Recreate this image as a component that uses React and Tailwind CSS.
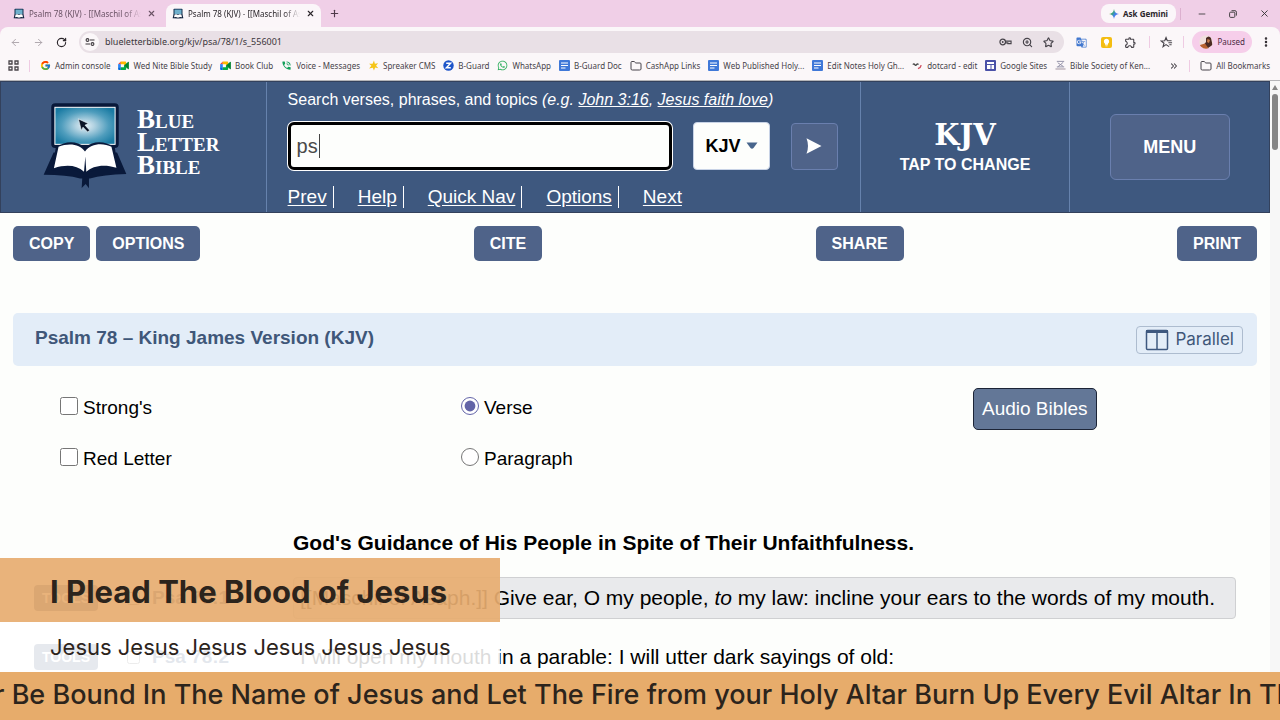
import { useState } from "react";
import {
  ArrowLeft,
  ArrowRight,
  RotateCw,
  X,
  Plus,
  Minus,
  Star,
  Folder,
  ZoomIn,
  EllipsisVertical,
  ChevronsRight,
} from "lucide-react";
import { FcGoogle } from "react-icons/fc";
import { FaWhatsapp } from "react-icons/fa";
import { MdLightbulb, MdGTranslate, MdOutlineExtension, MdPhoneInTalk } from "react-icons/md";

function BlbLogo({ className }) {
  return (
    <svg viewBox="128 70 254 260" className={className} aria-hidden="true">
      <defs>
        <radialGradient id="screen" cx="0.5" cy="0.5" r="0.6">
          <stop offset="0" stopColor="#e4f0f6" />
          <stop offset="0.25" stopColor="#b3d3e2" />
          <stop offset="0.65" stopColor="#4f9dbd" />
          <stop offset="1" stopColor="#1a7ba3" />
        </radialGradient>
      </defs>
      <rect x="153" y="71" width="204" height="135" rx="12" fill="#09193a" />
      <rect x="164" y="83" width="182" height="112" fill="url(#screen)" stroke="#fff" strokeWidth="3" />
      <path d="M160 220L130 287Q200 287 240 298H270Q310 287 380 285L352 220Z" fill="#09193a" />
      <path d="M167 203Q215 174 255 204Q295 174 345 203L356 275Q290 260 256 288Q215 260 154 275Z" fill="#09193a" />
      <path d="M175 202C205 190 240 193 255 217C272 191 310 190 335 202L350 266C312 254 278 260 259 278L256 232L252 278C230 258 200 255 161 267Z" fill="#fff" />
      <path d="M247 292h20v36l-10 -13l-12 12z" fill="#09193a" />
      <path d="M235 118l30 14l-10 5l14 15l-6 6l-14 -15l-5 10z" fill="#0b1426" stroke="#e8f2f6" strokeWidth="2" />
    </svg>
  );
}

function Favicon() {
  return (
    <svg viewBox="0 0 12 12" className="size-3 shrink-0" aria-hidden="true">
      <rect x="1.5" y="0.8" width="9" height="7" rx="0.8" fill="#12304f" />
      <rect x="2.5" y="1.6" width="7" height="4.6" fill="#6fb0cc" />
      <path d="M1.6 6.5L0.6 10.2L6 10.6L11.4 10.2L10.4 6.5Z" fill="#12243f" />
      <path d="M2.6 6.6Q4.6 5.8 6 7Q7.4 5.8 9.4 6.6L10 9.2Q7.6 8.8 6 9.7Q4.4 8.8 2 9.2Z" fill="#fff" />
    </svg>
  );
}

function MeetIcon() {
  return (
    <svg viewBox="0 0 24 20" className="h-[9px] w-[11px] shrink-0" aria-hidden="true">
      <path d="M6 1L0 7H6Z" fill="#ea4335" />
      <path d="M0 7H6V14H0Z" fill="#2684fc" />
      <path d="M0 14H6V20H2Q0 20 0 18Z" fill="#0066da" />
      <path d="M6 1H16Q18 1 18 3V8L13 10V7H6Z" fill="#ffba00" />
      <path d="M6 14H13V10L18 13V18Q18 20 16 20H6Z" fill="#00ac47" />
      <path d="M13 10L22 2Q24 1.500 24 3.500V17Q24 19 22 18Z" fill="#00832d" />
    </svg>
  );
}

function DocIcon() {
  return (
    <svg viewBox="0 0 11 11" className="size-[11px] shrink-0" aria-hidden="true">
      <rect width="11" height="11" rx="1" fill="#3f78d8" />
      <path d="M2 3H9M2 5.500H9M2 8H6.500" stroke="#fff" strokeWidth="1.2" />
    </svg>
  );
}

function SitesIcon() {
  return (
    <svg viewBox="0 0 11 11" className="size-[11px] shrink-0" aria-hidden="true">
      <rect width="11" height="11" rx="1" fill="#4a51a8" />
      <path d="M2 2H9V4H2ZM2 5H5.500V9H2ZM6.500 5H9V9H6.500Z" fill="#fff" />
    </svg>
  );
}

function SparkIcon() {
  return (
    <svg viewBox="0 0 12 12" className="size-[11px] shrink-0" aria-hidden="true">
      <path d="M6.500 0.500L7.500 4L11 3.600L8.800 6.300L11.300 9L7.800 8.300L6.500 11.500L5.200 8.500L1.200 9.300L3.700 6.300L1.200 4L5 4Z" fill="#f5c518" />
    </svg>
  );
}

function ZIcon() {
  return (
    <svg viewBox="0 0 12 12" className="size-[11px] shrink-0" aria-hidden="true">
      <circle cx="6" cy="6" r="5.700" fill="#1f55c9" />
      <path d="M3.500 3.500H8.300L3.700 8.500H8.500" fill="none" stroke="#fff" strokeWidth="1.600" />
    </svg>
  );
}

function DotcardIcon() {
  return (
    <svg viewBox="0 0 12 12" className="size-[11px] shrink-0" aria-hidden="true">
      <path d="M1 5Q2 3.500 3 5T5 5T7 5" fill="none" stroke="#444" strokeWidth="1.500" />
      <path d="M10 5.500Q9.500 8.500 6.500 9.500" fill="none" stroke="#d05060" strokeWidth="1.500" />
    </svg>
  );
}

function SocietyIcon() {
  return (
    <svg viewBox="0 0 12 12" className="size-[11px] shrink-0" aria-hidden="true">
      <path d="M2 1.500H10M3 3L9 7M9 2.500L3 7.500M2 7.500H10" stroke="#8d8ba3" strokeWidth="1" />
      <path d="M0.500 9.800H11.500" stroke="#b9aeb8" strokeWidth="1.500" />
    </svg>
  );
}

function GridIcon() {
  return (
    <svg viewBox="0 0 11 11" className="size-[11px]" aria-hidden="true">
      <path d="M1 1h3v3h-3zM7 1h3v3h-3zM1 7h3v3h-3zM7 7h3v3h-3z" fill="none" stroke="#4a454a" strokeWidth="1.300" />
    </svg>
  );
}

function GeminiIcon() {
  return (
    <svg viewBox="0 0 12 12" className="size-[10px]" aria-hidden="true">
      <defs>
        <linearGradient id="gem" x1="0" y1="0.2" x2="1" y2="0.8">
          <stop offset="0" stopColor="#e8b33a" />
          <stop offset="0.3" stopColor="#3aa86b" />
          <stop offset="0.6" stopColor="#3f7ff0" />
          <stop offset="1" stopColor="#7c62d8" />
        </linearGradient>
      </defs>
      <path d="M6 0Q6.600 5.400 12 6Q6.600 6.600 6 12Q5.400 6.600 0 6Q5.400 5.400 6 0Z" fill="url(#gem)" />
    </svg>
  );
}

function KeyIcon() {
  return (
    <svg viewBox="0 0 14 10" className="h-[10px] w-[13px]" aria-hidden="true">
      <circle cx="4" cy="5" r="3" fill="none" stroke="#47434a" strokeWidth="1.300" />
      <circle cx="4" cy="5" r="1" fill="#47434a" />
      <path d="M7 4H13V6.800H9.500V6H7" fill="none" stroke="#47434a" strokeWidth="1.200" />
    </svg>
  );
}

function TuneIcon() {
  return (
    <svg viewBox="0 0 10 10" className="size-[10px]" aria-hidden="true">
      <circle cx="2.500" cy="3" r="1.400" fill="none" stroke="#3d393d" strokeWidth="1.100" />
      <path d="M5 3H9.500M0.500 7H5" stroke="#3d393d" strokeWidth="1.200" />
      <circle cx="7.500" cy="7" r="1.400" fill="none" stroke="#3d393d" strokeWidth="1.100" />
    </svg>
  );
}

function StarListIcon() {
  return (
    <svg viewBox="0 0 14 12" className="h-3 w-[13px]" aria-hidden="true">
      <path d="M9.800 11L6.500 8.800L3.300 11L4.300 7.300L1.300 4.900L5.100 4.700L6.500 1.200L7.900 4.700H12.500M9 6.800H13M10 9H12.500" fill="none" stroke="#47434a" strokeWidth="1.200" />
    </svg>
  );
}

function RestoreIcon() {
  return (
    <svg viewBox="0 0 8 8" className="size-2" aria-hidden="true">
      <rect x="0.600" y="2.200" width="5.200" height="5.200" rx="1" fill="none" stroke="#333" strokeWidth="0.900" />
      <path d="M2.500 0.700H6Q7.400 0.700 7.400 2.200V5.600" fill="none" stroke="#333" strokeWidth="0.900" />
    </svg>
  );
}

function Avatar() {
  return (
    <svg viewBox="0 0 14 14" className="size-[14px]" aria-hidden="true">
      <defs>
        <clipPath id="face">
          <circle cx="7" cy="7" r="6.800" />
        </clipPath>
      </defs>
      <g clipPath="url(#face)">
        <rect width="14" height="14" fill="#f0dfdc" />
        <path d="M7 3Q10 0 12 3L13.500 10L9 13L4 11L7 7Z" fill="#4b2a22" />
        <path d="M8.500 4L11 5L10 8L8 7Z" fill="#c87e4c" />
        <path d="M1 10L6 8.500L10 14H1Z" fill="#b8622f" />
      </g>
    </svg>
  );
}

const folder = <Folder size={12} strokeWidth={2} className="shrink-0" />;

const bookmarks = [
  { label: "Admin console", icon: <FcGoogle size={11} className="shrink-0" /> },
  { label: "Wed Nite Bible Study", icon: <MeetIcon /> },
  { label: "Book Club", icon: <MeetIcon /> },
  { label: "Voice - Messages", icon: <MdPhoneInTalk size={11} color="#12a05a" className="shrink-0" /> },
  { label: "Spreaker CMS", icon: <SparkIcon /> },
  { label: "B-Guard", icon: <ZIcon /> },
  { label: "WhatsApp", icon: <FaWhatsapp size={11} color="#2fae5d" className="shrink-0" /> },
  { label: "B-Guard Doc", icon: <DocIcon /> },
  { label: "CashApp Links", icon: folder },
  { label: "Web Published Holy...", icon: <DocIcon /> },
  { label: "Edit Notes Holy Gh...", icon: <DocIcon /> },
  { label: "dotcard - edit", icon: <DotcardIcon /> },
  { label: "Google Sites", icon: <SitesIcon /> },
  { label: "Bible Society of Ken...", icon: <SocietyIcon /> },
];

function Tab({ active }) {
  return (
    <div
      className={`flex h-[23px] w-[155px] items-center gap-1 px-1.5 pb-1 ${
        active ? "rounded-t-lg bg-[#fbf6f9] text-[#2b262b]" : "text-[#6a5365]"
      }`}
    >
      <Favicon />
      <span className="w-[112px] overflow-hidden whitespace-nowrap mask-r-from-85%">
        Psalm 78 (KJV) - [[Maschil of As
      </span>
      <button aria-label="Close tab" className="ml-auto">
        <X size={9} strokeWidth={3} />
      </button>
    </div>
  );
}

function Divider() {
  return <span className="h-3 w-px bg-[#efcbe3]" />;
}

function BrowserChrome() {
  return (
    <div className="bg-[#f0cfe7] font-['Noto_Sans',sans-serif] text-[8px] leading-3 text-[#47434a]">
      <div className="flex h-[27px] items-end">
        <div className="flex gap-1 pl-[7px]">
          <Tab />
          <Tab active />
        </div>
        <button aria-label="New tab" className="mb-2 ml-2 text-[#4e3a4a]">
          <Plus size={11} strokeWidth={2.500} />
        </button>
        <div className="ml-auto flex h-[27px] items-center pr-2.5">
          <button className="flex h-[19px] items-center gap-1 rounded-lg bg-[#fbf6f9] px-2 text-[8px] font-bold text-[#2b262b]">
            <GeminiIcon />
            Ask Gemini
          </button>
          <span className="mx-1 h-3 w-px bg-[#dcb0cf]" />
          <div className="ml-3 flex items-center gap-[22px] text-[#333]">
            <button aria-label="Minimize"><Minus size={10} strokeWidth={2} /></button>
            <button aria-label="Restore"><RestoreIcon /></button>
            <button aria-label="Close"><X size={11} strokeWidth={2} /></button>
          </div>
        </div>
      </div>

      <div className="rounded-t-lg bg-[#fbf7f9]">
        <div className="flex h-[30px] items-center pl-2.5 pr-2">
          <div className="flex items-center gap-3 pr-3">
            <button aria-label="Back" className="text-[#aaa2a8]"><ArrowLeft size={11} /></button>
            <button aria-label="Forward" className="text-[#aaa2a8]"><ArrowRight size={11} /></button>
            <button aria-label="Reload" className="text-[#2b262b]"><RotateCw size={11} strokeWidth={2.500} /></button>
          </div>
          <div className="flex h-[22px] flex-1 items-center rounded-full bg-[#e9e0e6] pl-0.5">
            <button aria-label="Site information" className="flex size-[18px] items-center justify-center rounded-full bg-[#fbf7f9]">
              <TuneIcon />
            </button>
            <input
              aria-label="Address"
              defaultValue="blueletterbible.org/kjv/psa/78/1/s_556001"
              className="ml-1.5 flex-1 bg-transparent text-[9px] text-[#3b363b] outline-none"
            />
            <div className="flex items-center gap-2.5 pr-2.5">
              <KeyIcon />
              <ZoomIn size={11} strokeWidth={2.500} />
              <Star size={11} strokeWidth={2.500} />
            </div>
          </div>
          <div className="flex items-center pl-3">
            <MdGTranslate size={11} color="#4278cf" />
            <span className="ml-3.5 flex size-[11px] items-center justify-center rounded-xs bg-[#f4bd11] text-white">
              <MdLightbulb size={9} />
            </span>
            <MdOutlineExtension size={13} className="mx-3" />
            <Divider />
            <span className="mx-2.5"><StarListIcon /></span>
            <Divider />
            <button className="ml-2 flex h-[22px] items-center gap-1 rounded-full bg-[#f6ceea] px-[7px] text-[#4b2a43]">
              <Avatar />
              Paused
            </button>
            <button aria-label="Menu" className="ml-2 text-[#2b262b]">
              <EllipsisVertical size={12} strokeWidth={3} />
            </button>
          </div>
        </div>

        <nav className="flex h-6 items-center border-b border-[#b5b5b8] pl-2 pr-2.5 pb-1.5">
          <button aria-label="Apps"><GridIcon /></button>
          <span className="mx-2.5 h-3 w-px bg-[#efcbe3]" />
          <div className="flex items-center gap-2">
            {bookmarks.map((b) => (
              <a key={b.label} href="#" className="flex items-center gap-1 whitespace-nowrap">
                {b.icon}
                {b.label}
              </a>
            ))}
          </div>
          <div className="ml-auto flex items-center gap-2.5">
            <ChevronsRight size={10} strokeWidth={2.500} />
            <Divider />
            <a href="#" className="flex items-center gap-1 whitespace-nowrap">
              {folder}
              All Bookmarks
            </a>
          </div>
        </nav>
      </div>
    </div>
  );
}

const quickLinks = ["Prev", "Help", "Quick Nav", "Options", "Next"];

function SiteHeader() {
  const [query, setQuery] = useState("ps");

  return (
    <header className="grid h-[132px] grid-cols-[265fr_595fr_210fr_200fr] border border-[#33415c] bg-[#3e587f] text-white">
      <a href="#" className="flex items-center pl-[42px] pb-0.5">
        <BlbLogo className="h-[86px] w-[84px]" />
        <span className="ml-2.5 pb-2 font-['Liberation_Serif',serif] text-[27px] leading-[23px] font-bold [font-variant:small-caps]">
          Blue
          <br />
          Letter
          <br />
          Bible
        </span>
      </a>

      <div className="border-l border-[#6682ad] pl-[21px] pt-2">
        <label htmlFor="search" className="block text-base leading-5">
          {"Search verses, phrases, and topics "}
          <i>
            (e.g. <a href="#" className="underline">John 3:16</a>,{" "}
            <a href="#" className="underline">Jesus faith love</a>)
          </i>
        </label>
        <div className="mt-3 flex items-center">
          <div className="relative">
            <input
              id="search"
              value={query}
              onChange={(e) => setQuery(e.target.value)}
              className="h-12 w-96 rounded-md border-3 border-black bg-[#fdfefc] px-1.5 text-xl text-[#4a4a4a] ring-1 ring-white outline-none"
            />
            <span className="absolute left-[31px] top-3 h-6 w-px bg-[#444]" />
          </div>
          <div className="relative ml-[21px]">
            <select
              aria-label="Version"
              defaultValue="KJV"
              className="h-12 w-[77px] appearance-none rounded-sm border border-[#c8d3e6] bg-[#fdfefc] px-3 text-lg font-bold text-black"
            >
              <option>KJV</option>
              <option>ESV</option>
            </select>
            <svg viewBox="0 0 12 8" className="pointer-events-none absolute right-3 top-5 h-2 w-3" aria-hidden="true">
              <path d="M0.500 0.500H11.500L7.500 6Q6 7.500 4.500 6Z" fill="#48658c" />
            </svg>
          </div>
          <button aria-label="Search" className="ml-[21px] flex size-[47px] items-center justify-center rounded-sm border border-[#6a7fae] bg-[#4f6389]">
            <svg viewBox="0 0 16 18" className="h-[18px] w-4" aria-hidden="true">
              <path d="M0.500 1.200L15.500 9L0.500 16.800Q3.500 9 0.500 1.200Z" fill="#fff" />
            </svg>
          </button>
        </div>
        <ul className="mt-4 flex text-[19px] leading-[22px]">
          {quickLinks.map((link) => (
            <li key={link} className="mr-6 border-r border-white pr-1.5 last:border-0">
              <a href="#" className="underline underline-offset-2">{link}</a>
            </li>
          ))}
        </ul>
      </div>

      <button className="flex flex-col items-center justify-center border-l border-[#6682ad] pt-1 font-bold">
        <span className="font-['DejaVu_Serif',serif] text-[29px] leading-8">KJV</span>
        <span className="text-base leading-7">TAP TO CHANGE</span>
      </button>

      <div className="flex items-center justify-center border-l border-[#6682ad]">
        <button className="h-[66px] w-[120px] rounded-md border border-[#6a7fae] bg-[#4f6389] text-lg font-bold">
          MENU
        </button>
      </div>
    </header>
  );
}

function ToolButton({ children }) {
  return (
    <button className="h-[35px] rounded-[5px] bg-[#4f6389] px-4 text-base font-bold text-white">
      {children}
    </button>
  );
}

function Option({ type, name, label, checked }) {
  return (
    <label className="flex items-center gap-[5px] text-[19px] leading-6">
      <input type={type} name={name} defaultChecked={checked} className="mb-1 size-[18px] accent-[#6264a7]" />
      {label}
    </label>
  );
}

function Verse({ reference, current, children }) {
  return (
    <div className="flex items-center">
      <button className="h-[26px] w-16 rounded-sm bg-[#4f6389] text-sm font-bold text-white">TOOLS</button>
      <label className="ml-[29px] flex w-[166px] items-center gap-3 text-[19px] font-bold text-[#3e587f]">
        <input type="checkbox" className="size-[13px]" />
        {reference}
      </label>
      <p
        className={`flex-1 whitespace-nowrap rounded-sm border px-1.5 py-2 text-[21px] leading-6 ${
          current ? "border-[#cfd0d2] bg-[#e9eaec]" : "border-transparent"
        }`}
      >
        {children}
      </p>
    </div>
  );
}

function Passage() {
  return (
    <main className="px-[13px]">
      <div className="flex justify-between pt-[13px]">
        <div className="flex gap-1.5">
          <ToolButton>COPY</ToolButton>
          <ToolButton>OPTIONS</ToolButton>
        </div>
        <ToolButton>CITE</ToolButton>
        <ToolButton>SHARE</ToolButton>
        <ToolButton>PRINT</ToolButton>
      </div>

      <div className="mt-[52px] flex h-[53px] items-center justify-between rounded-[5px] bg-[#e3edf8] pl-[22px] pr-3.5 text-[#3f5779]">
        <h1 className="pb-0.5 text-[19px] font-bold">Psalm 78 – King James Version (KJV)</h1>
        <button className="flex h-7 items-center gap-1.5 rounded-sm border border-[#adbccf] px-2 font-['Inter',sans-serif] text-[17px]">
          <svg viewBox="0 0 24 22" className="h-[22px] w-6" aria-hidden="true">
            <rect x="1.500" y="1.500" width="21" height="19" rx="1" fill="none" stroke="#3e587f" strokeWidth="1.500" />
            <path d="M1 2.500H23" stroke="#3e587f" strokeWidth="3" />
            <path d="M12 2V20" stroke="#3e587f" strokeWidth="1.500" />
          </svg>
          Parallel
        </button>
      </div>

      <div className="mt-[22px] grid grid-cols-[401fr_512fr_284fr] pl-[47px]">
        <div className="flex flex-col gap-[27px] pt-2">
          <Option type="checkbox" name="strongs" label="Strong's" />
          <Option type="checkbox" name="red" label="Red Letter" />
        </div>
        <div className="flex flex-col gap-[27px] pt-2">
          <Option type="radio" name="layout" label="Verse" checked />
          <Option type="radio" name="layout" label="Paragraph" />
        </div>
        <div>
          <button className="h-[42px] rounded-[5px] border border-[#1c2436] bg-[#637797] px-2 text-[19px] text-white">
            Audio Bibles
          </button>
        </div>
      </div>

      <section className="mt-[58px] px-[21px]">
        <h2 className="pl-[259px] text-[21px] leading-7 font-bold">
          God's Guidance of His People in Spite of Their Unfaithfulness.
        </h2>
        <div className="mt-5 flex flex-col gap-[17px]">
          <Verse reference="Psa 78:1" current>
            [[Maschil of Asaph.]] Give ear, O my people, <i>to</i> my law: incline your ears to the words of my mouth.
          </Verse>
          <Verse reference="Psa 78:2">
            I will open my mouth in a parable: I will utter dark sayings of old:
          </Verse>
        </div>
      </section>
    </main>
  );
}

function LowerThird() {
  return (
    <div className="absolute inset-x-0 bottom-0 font-['Inter',sans-serif] text-[#2c241c] whitespace-nowrap">
      <div className="w-[500px]">
        <div className="flex h-16 items-center bg-[#e7ad70]/92 pl-[50px] pt-1 text-[31px] font-bold">
          I Plead The Blood of Jesus
        </div>
        <div className="flex h-[50px] items-center bg-white/86 pl-[50px] text-[22px]">
          Jesus Jesus Jesus Jesus Jesus Jesus
        </div>
      </div>
      <div className="h-12 overflow-hidden bg-[#e7ac6b]">
        <p className="-ml-1.5 text-[27px] leading-[46px] font-medium">
          r Be Bound In The Name of Jesus and Let The Fire from your Holy Altar Burn Up Every Evil Altar In The
        </p>
      </div>
    </div>
  );
}

export default function App() {
  return (
    <div className="relative flex h-screen flex-col overflow-hidden bg-[#fdfefc] font-['Liberation_Sans',Arial,sans-serif] text-black">
      <BrowserChrome />
      <div className="flex min-h-0 flex-1">
        <div className="min-w-0 flex-1 overflow-hidden">
          <SiteHeader />
          <Passage />
        </div>
        <div className="flex w-2.5 flex-col items-center bg-[#f7f7f7] pt-1">
          <svg viewBox="0 0 6 5" className="h-[5px] w-1.5" aria-hidden="true">
            <path d="M3 0L6 5H0Z" fill="#858585" />
          </svg>
          <div className="mt-1 h-14 w-1.5 rounded-full bg-[#858585]" />
        </div>
      </div>
      <LowerThird />
    </div>
  );
}
